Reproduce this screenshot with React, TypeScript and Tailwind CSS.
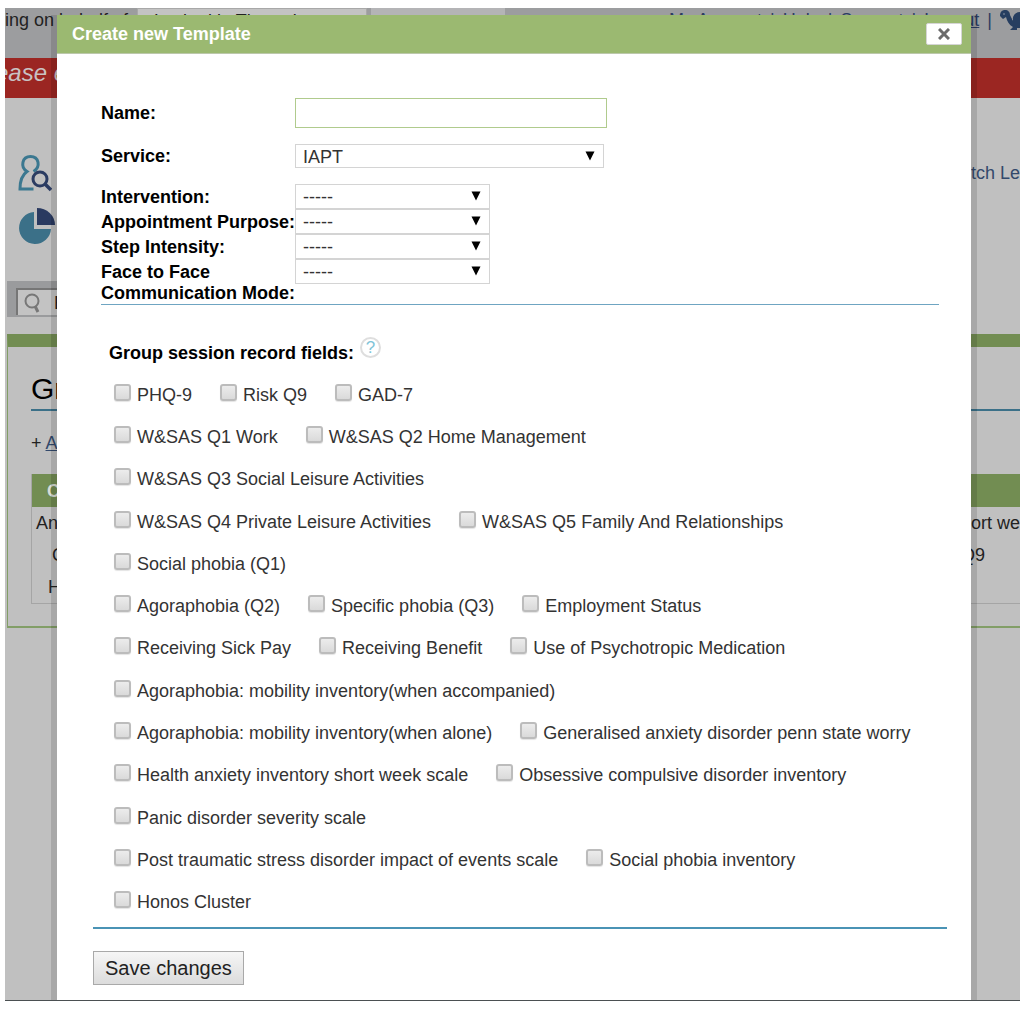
import { useState } from "react";

const serviceOptions = ["IAPT"];

const sessionSelects = [
  { id: "intervention", label: "Intervention:" },
  { id: "purpose", label: "Appointment Purpose:" },
  { id: "intensity", label: "Step Intensity:" },
  { id: "mode", label: "Face to Face Communication Mode:" },
];

const accountLinks = ["My Account", "Help", "Support", "Logout"];

const fieldRows = [
  ["PHQ-9", "Risk Q9", "GAD-7"],
  ["W&SAS Q1 Work", "W&SAS Q2 Home Management"],
  ["W&SAS Q3 Social Leisure Activities"],
  ["W&SAS Q4 Private Leisure Activities", "W&SAS Q5 Family And Relationships"],
  ["Social phobia (Q1)"],
  ["Agoraphobia (Q2)", "Specific phobia (Q3)", "Employment Status"],
  ["Receiving Sick Pay", "Receiving Benefit", "Use of Psychotropic Medication"],
  ["Agoraphobia: mobility inventory(when accompanied)"],
  [
    "Agoraphobia: mobility inventory(when alone)",
    "Generalised anxiety disorder penn state worry",
  ],
  [
    "Health anxiety inventory short week scale",
    "Obsessive compulsive disorder inventory",
  ],
  ["Panic disorder severity scale"],
  [
    "Post traumatic stress disorder impact of events scale",
    "Social phobia inventory",
  ],
  ["Honos Cluster"],
];

function SelectBox({
  id,
  options,
  className,
}: {
  id: string;
  options: string[];
  className: string;
}) {
  return (
    <div className={`relative ${className}`}>
      <select
        id={id}
        className="block w-full h-full appearance-none border border-[#d4d4d4] bg-white pl-[7px] pr-8 pt-px text-[18px] leading-5 text-[#333]"
      >
        {options.map((o) => (
          <option key={o}>{o}</option>
        ))}
      </select>
      <svg
        viewBox="0 0 10 10"
        className="pointer-events-none absolute right-[9px] top-[7px] size-[10px]"
      >
        <path d="M0.5 0.5h9L5 9.5z" fill="#000" />
      </svg>
    </div>
  );
}

function FieldCheckbox({ label }: { label: string }) {
  const [checked, setChecked] = useState(false);
  return (
    <label className="flex items-center gap-[6px] whitespace-nowrap">
      <input
        type="checkbox"
        checked={checked}
        onChange={(e) => setChecked(e.target.checked)}
        className="mb-[6px] size-[17px] appearance-none rounded-[3px] border-2 border-[#bcbcbc] bg-linear-to-b from-[#ececec] to-[#dadada] shadow-[0_1px_1px_#e4e4e4] checked:bg-[#4a95b8]"
      />
      {label}
    </label>
  );
}

function PersonSearchIcon() {
  return (
    <svg viewBox="0 0 34 38" className="h-[38px] w-[34px]" fill="none">
      <path
        d="M15.500 34H2C2 26 4 20 9 16.500C2 12 4 1.500 12.500 1.500C21 1.500 23 12 15.500 16.500"
        stroke="#3b7890"
        strokeWidth="3"
      />
      <circle cx="22" cy="24" r="7" stroke="#2b3c62" strokeWidth="3" />
      <path d="M27 29l6 6" stroke="#2b3c62" strokeWidth="3.500" />
    </svg>
  );
}

function PieIcon() {
  return (
    <svg viewBox="0 0 38 38" className="size-[38px]">
      <path d="M16 5v17h17A16 16 0 1 1 16 5z" fill="#3b7088" />
      <path d="M19 1a18 17 0 0 1 18 17H19z" fill="#2a3a60" />
    </svg>
  );
}

function BackgroundPage() {
  return (
    <div className="absolute inset-0 overflow-hidden whitespace-nowrap bg-[#c0c0c0] text-[18px] leading-6 text-[#222]">
      <div className="flex h-[50px] items-start bg-[#9c9d9f]">
        <span className="w-[132px]">ing on behalf of</span>
        <span className="h-[26px] w-[230px] border border-[#a8a8a8] bg-[#c3c3c3] pl-4">
          Locked in Therapist
        </span>
        <span className="ml-1 h-[26px] w-[134px] bg-[#b4b4b6]" />
        <nav className="ml-auto flex gap-2 text-[#2b3c62]">
          {accountLinks.map((link) => (
            <span key={link} className="flex gap-2">
              <a href="#account" className="underline">{link}</a>
              <span>|</span>
            </span>
          ))}
          <svg viewBox="0 0 20 20" className="mt-[2px] h-5 w-5">
            <path
              d="M0 6C0 2 2 0 5 0c3 0 5 2 5 5l3 6c-1-5 2-9 7-9v16h-3v2h-7l3-3C9 15 7 11 6 7L3 9z"
              fill="#263e60"
            />
            <circle cx="4" cy="4" r="1" fill="#6a788e" />
          </svg>
        </nav>
      </div>
      <div className="h-10 bg-[#9b2622] pt-[2px]">
        <p className="-ml-[10px] text-2xl leading-[26px] italic text-[#c9c2c2]">ease e</p>
      </div>
      <div className="flex h-[183px] justify-between pl-[13px] pt-[57px]">
        <div className="flex flex-col gap-[14px]">
          <PersonSearchIcon />
          <PieIcon />
        </div>
        <a href="#match" className="mt-[6px] text-[#33496b]">tch Le</a>
      </div>
      <div className="ml-[2px] h-9 w-[500px] bg-[#9a9b9d] pl-[9px] pt-[7px]">
        <div className="flex h-[27px] items-center gap-3 border-l-2 border-t-2 border-[#767676] bg-[#c3c3c3] pl-[6px]">
          <svg viewBox="0 0 18 20" className="h-5 w-[18px]" fill="none" stroke="#777">
            <circle cx="8" cy="8" r="6.500" strokeWidth="2" />
            <path d="M11 13l3 6" strokeWidth="3" />
          </svg>
          <span>E</span>
        </div>
      </div>
      <div className="ml-[2px] mt-[17px] h-[294px] border-b-2 border-l border-[#829e67] border-t-[13px] border-t-[#728d52] pl-[23px]">
        <h1 className="mt-[22px] h-[42px] border-b-2 border-[#3b7088] text-[30px] leading-[40px] text-black">
          Gr
        </h1>
        <p className="mt-5">
          + <a href="#add" className="text-[#33496b] underline">Ad</a>
        </p>
        <table className="mt-[19px] w-full border-b border-l border-[#a5a5a5]">
          <thead>
            <tr className="h-[33px] bg-[#728d52] text-left text-[#d8dcd4]">
              <th className="pl-[15px]">C</th>
              <th />
            </tr>
          </thead>
          <tbody>
            <tr className="h-8">
              <td className="pl-[4px]">An</td>
              <td className="text-right">ort we</td>
            </tr>
            <tr className="h-8">
              <td className="pl-5">C</td>
              <td className="pr-[35px] text-right">Q9</td>
            </tr>
            <tr className="h-8">
              <td className="pl-4">H</td>
              <td />
            </tr>
          </tbody>
        </table>
      </div>
    </div>
  );
}

export default function App() {
  return (
    <div className="bg-white pb-2 pl-[5px] pr-1 pt-2 font-['Liberation_Sans',Arial,sans-serif]">
      <div className="relative border-b border-[#4b5052] pt-[7px]">
        <BackgroundPage />

        <div className="relative ml-[46px] mr-[43px] bg-black/12 px-[6px]">
          <div
            role="dialog"
            aria-labelledby="dialog-title"
            className="bg-white text-[18px] leading-[21px]"
          >
            <header className="flex h-[39px] items-center justify-between border-b border-[#bcc8ab] bg-[#9bb971] pl-[15px] pr-[9px]">
              <h2 id="dialog-title" className="font-bold text-white">
                Create new Template
              </h2>
              <button
                type="button"
                aria-label="Close"
                className="flex h-[22px] w-9 items-center justify-center rounded-xs border border-[#d5d5d5] bg-white"
              >
                <svg viewBox="0 0 12 12" className="size-3" stroke="#6b6b6b" strokeWidth="3">
                  <path d="M1 1l10 10M11 1L1 11" />
                </svg>
              </button>
            </header>

            <form className="pb-[15px] pl-9 pr-6 pt-11" onSubmit={(e) => e.preventDefault()}>
              <div className="mx-2 border-b border-[#6fa5c2] font-bold">
                <div className="flex items-center">
                  <label htmlFor="name" className="w-[194px]">Name:</label>
                  <input
                    id="name"
                    type="text"
                    className="h-[30px] w-[312px] border border-[#b0cb8d] bg-white px-2 font-normal"
                  />
                </div>
                <div className="mt-4 flex items-center">
                  <label htmlFor="service" className="w-[194px]">Service:</label>
                  <SelectBox id="service" options={serviceOptions} className="h-6 w-[309px] font-normal" />
                </div>
                <div className="mt-4">
                  {sessionSelects.map((s) => (
                    <div key={s.id} className="flex items-start">
                      <label htmlFor={s.id} className="w-[194px] pt-[3px]">{s.label}</label>
                      <SelectBox id={s.id} options={["-----"]} className="h-[25px] w-[195px] font-normal" />
                    </div>
                  ))}
                </div>
              </div>

              <fieldset className="mt-8">
                <legend className="flex items-start gap-[6px] pl-4 font-bold">
                  <span className="pt-[6px]">Group session record fields:</span>
                  <button
                    type="button"
                    aria-label="Help"
                    className="flex size-[21px] items-center justify-center rounded-full border-2 border-[#dedede] text-[17px] font-normal text-[#80c4d8]"
                  >
                    ?
                  </button>
                </legend>
                <div className="mt-[10px] grid min-h-[550px] auto-rows-fr pl-[21px] text-[#333]">
                  {fieldRows.map((row) => (
                    <div key={row[0]} className="flex items-center gap-7">
                      {row.map((label) => (
                        <FieldCheckbox key={label} label={label} />
                      ))}
                    </div>
                  ))}
                </div>
              </fieldset>

              <div className="mt-[3px] border-t-2 border-[#4a93b5] pt-[22px]">
                <button
                  type="submit"
                  className="h-[34px] border border-[#a9a9a9] bg-linear-to-b from-[#f6f6f6] to-[#dcdcdc] px-[11px] text-[20px] text-[#222]"
                >
                  Save changes
                </button>
              </div>
            </form>
          </div>
        </div>
      </div>
    </div>
  );
}
